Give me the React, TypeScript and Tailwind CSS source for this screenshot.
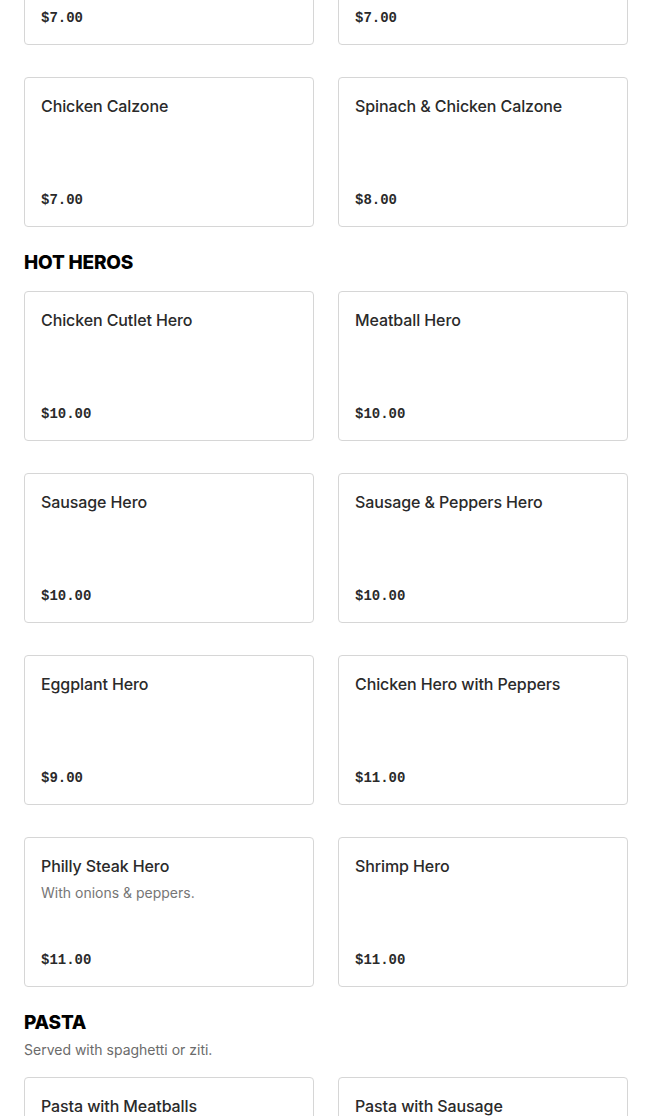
import React from 'react';

interface Item {
  name: string;
  price: string;
  desc?: string;
}

const Card: React.FC<{ item: Item }> = ({ item }) => (
  <div className="h-[150px] rounded border border-[#d6d6d6] bg-white p-4 flex flex-col justify-between">
    <div>
      <div className="text-[16px] leading-6 font-medium text-[#2a2a2a] tracking-[-0.1px]">{item.name}</div>
      {item.desc && <div className="text-[14px] leading-5 text-[#767676] mt-[5px]">{item.desc}</div>}
    </div>
    <div className="font-['Liberation_Mono',monospace] font-bold text-[14px] leading-5 text-[#2a2a2a]">{item.price}</div>
  </div>
);

const Grid: React.FC<{ items: Item[] }> = ({ items }) => (
  <div className="grid grid-cols-2 gap-x-6 gap-y-8">
    {items.map((it) => (
      <Card key={it.name} item={it} />
    ))}
  </div>
);

const calzones: Item[] = [
  { name: 'Cheese Calzone', price: '$7.00' },
  { name: 'Sausage Calzone', price: '$7.00' },
  { name: 'Chicken Calzone', price: '$7.00' },
  { name: 'Spinach & Chicken Calzone', price: '$8.00' },
];

const heros: Item[] = [
  { name: 'Chicken Cutlet Hero', price: '$10.00' },
  { name: 'Meatball Hero', price: '$10.00' },
  { name: 'Sausage Hero', price: '$10.00' },
  { name: 'Sausage & Peppers Hero', price: '$10.00' },
  { name: 'Eggplant Hero', price: '$9.00' },
  { name: 'Chicken Hero with Peppers', price: '$11.00' },
  { name: 'Philly Steak Hero', price: '$11.00', desc: 'With onions & peppers.' },
  { name: 'Shrimp Hero', price: '$11.00' },
];

const pasta: Item[] = [
  { name: 'Pasta with Meatballs', price: '$12.00' },
  { name: 'Pasta with Sausage', price: '$12.00' },
];

export default function App() {
  return (
    <div className="h-[1116px] overflow-hidden bg-white font-['Inter',sans-serif]">
      <div className="w-[604px] ml-6 -mt-[105px]">
        <Grid items={calzones} />

        <h2 className="mt-[22px] mb-[14px] text-[19px] leading-7 font-extrabold text-black tracking-[-0.2px]">HOT HEROS</h2>
        <Grid items={heros} />

        <h2 className="mt-[22px] text-[19px] leading-7 font-extrabold text-black tracking-[-0.2px]">PASTA</h2>
        <p className="mt-[3px] mb-[17px] text-[14px] leading-5 text-[#6b6b6b]">Served with spaghetti or ziti.</p>
        <Grid items={pasta} />
      </div>
    </div>
  );
}
